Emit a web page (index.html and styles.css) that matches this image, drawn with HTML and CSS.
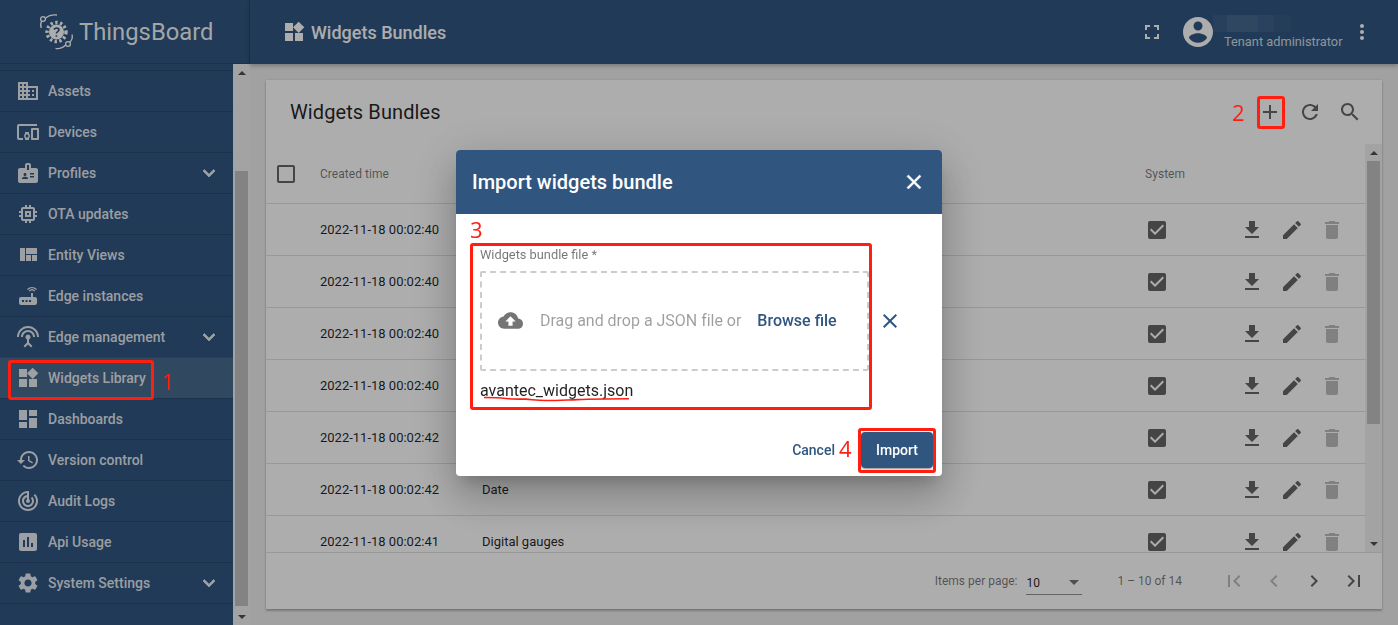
FILE: index.html
```html
<!DOCTYPE html>
<html lang="en">
<head>
    <meta charset="UTF-8">
    <title>ThingsBoard | Widgets Bundles</title>
    <link rel="stylesheet" href="styles.css">
</head>
<body>

    <svg class="sprite" xmlns="http://www.w3.org/2000/svg">
        <symbol id="i-assets" viewBox="0 0 24 24"><path d="M12 7V3H2v18h20V7H12zM6 19H4v-2h2v2zm0-4H4v-2h2v2zm0-4H4V9h2v2zm0-4H4V5h2v2zm4 12H8v-2h2v2zm0-4H8v-2h2v2zm0-4H8V9h2v2zm0-4H8V5h2v2zm10 12h-8v-2h2v-2h-2v-2h2v-2h-2V9h8v10zm-2-8h-2v2h2v-2zm0 4h-2v2h2v-2z"/></symbol>
        <symbol id="i-devices" viewBox="0 0 24 24"><path d="M3 6h18V4H3c-1.1 0-2 .9-2 2v12c0 1.1.9 2 2 2h4v-2H3V6zm10 6H9v1.78c-.61.55-1 1.33-1 2.22s.39 1.67 1 2.22V20h4v-1.78c.61-.55 1-1.34 1-2.22s-.39-1.67-1-2.22V12zm-2 5.5c-.83 0-1.5-.67-1.5-1.5s.67-1.5 1.5-1.5 1.5.67 1.5 1.5-.67 1.5-1.5 1.5zM22 8h-6c-.5 0-1 .5-1 1v10c0 .5.5 1 1 1h6c.5 0 1-.5 1-1V9c0-.5-.5-1-1-1zm-1 10h-4v-8h4v8z"/></symbol>
        <symbol id="i-badge" viewBox="0 0 24 24"><path d="M20 7h-5V4c0-1.1-.9-2-2-2h-2c-1.1 0-2 .9-2 2v3H4c-1.1 0-2 .9-2 2v11c0 1.1.9 2 2 2h16c1.1 0 2-.9 2-2V9c0-1.1-.9-2-2-2zM9 12c.83 0 1.5.67 1.5 1.5S9.83 15 9 15s-1.5-.67-1.5-1.5S8.17 12 9 12zm3 6H6v-.75c0-1 2-1.5 3-1.5s3 .5 3 1.5V18zm1-9h-2V4h2v5zm5 7.5h-4V15h4v1.5zm0-3h-4V12h4v1.5z"/></symbol>
        <symbol id="i-memory" viewBox="0 0 24 24"><path d="M15 9H9v6h6V9zm-2 4h-2v-2h2v2zm8-2V9h-2V7c0-1.1-.9-2-2-2h-2V3h-2v2h-2V3H9v2H7c-1.1 0-2 .9-2 2v2H3v2h2v2H3v2h2v2c0 1.1.9 2 2 2h2v2h2v-2h2v2h2v-2h2c1.1 0 2-.9 2-2v-2h2v-2h-2v-2h2zm-4 6H7V7h10v10z"/></symbol>
        <symbol id="i-quilt" viewBox="0 0 24 24"><path d="M10 18h5v-6h-5v6zm-6 0h5V5H4v13zm12 0h5v-6h-5v6zM10 5v6h11V5H10z"/></symbol>
        <symbol id="i-router" viewBox="0 0 24 24"><path d="M20.2 5.9l.8-.8C19.6 3.7 17.8 3 16 3s-3.6.7-5 2.1l.8.8C13 4.8 14.5 4.2 16 4.2s3 .6 4.2 1.7zm-.9.8c-.9-.9-2.1-1.4-3.3-1.4s-2.4.5-3.3 1.4l.8.8c.7-.7 1.6-1 2.5-1 .9 0 1.8.3 2.5 1l.8-.8zM19 13h-2V9h-2v4H5c-1.1 0-2 .9-2 2v4c0 1.1.9 2 2 2h14c1.1 0 2-.9 2-2v-4c0-1.1-.9-2-2-2zM8 18H6v-2h2v2zm3.5 0h-2v-2h2v2zm3.5 0h-2v-2h2v2z"/></symbol>
        <symbol id="i-antenna" viewBox="0 0 24 24"><path d="M12 5c-3.87 0-7 3.13-7 7h2c0-2.76 2.24-5 5-5s5 2.24 5 5h2c0-3.87-3.13-7-7-7zm1 9.29c.88-.39 1.5-1.26 1.5-2.29 0-1.38-1.12-2.5-2.5-2.5S9.5 10.62 9.5 12c0 1.02.62 1.9 1.5 2.29v3.3L7.59 21 9 22.41l3-3 3 3L16.41 21 13 17.59v-3.3zM12 1C5.93 1 1 5.93 1 12h2c0-4.97 4.03-9 9-9s9 4.03 9 9h2c0-6.07-4.93-11-11-11z"/></symbol>
        <symbol id="i-widgets" viewBox="0 0 24 24"><path d="M13 13v8h8v-8h-8zM3 21h8v-8H3v8zM3 3v8h8V3H3zm13.66-1.31L11 7.34 16.66 13l5.66-5.66-5.66-5.65z"/></symbol>
        <symbol id="i-dashboard" viewBox="0 0 24 24"><path d="M3 13h8V3H3v10zm0 8h8v-6H3v6zm10 0h8V11h-8v10zm0-18v6h8V3h-8z"/></symbol>
        <symbol id="i-history" viewBox="0 0 24 24"><path d="M13 3c-4.97 0-9 4.03-9 9H1l3.89 3.89.07.14L9 12H6c0-3.87 3.13-7 7-7s7 3.13 7 7-3.13 7-7 7c-1.93 0-3.68-.79-4.94-2.06l-1.42 1.42C8.27 19.99 10.51 21 13 21c4.97 0 9-4.03 9-9s-4.03-9-9-9zm-1 5v5l4.28 2.54.72-1.21-3.5-2.08V8H12z"/></symbol>
        <symbol id="i-track" viewBox="0 0 24 24"><path d="M19.07 4.93l-1.41 1.41C19.1 7.79 20 9.79 20 12c0 4.42-3.58 8-8 8s-8-3.58-8-8c0-4.08 3.05-7.44 7-7.93v2.02C8.16 6.57 6 9.03 6 12c0 3.31 2.69 6 6 6s6-2.69 6-6c0-1.66-.67-3.16-1.76-4.24l-1.41 1.41C15.55 9.9 16 10.9 16 12c0 2.21-1.79 4-4 4s-4-1.79-4-4c0-1.86 1.28-3.41 3-3.86v2.14c-.6.35-1 .98-1 1.72 0 1.1.9 2 2 2s2-.9 2-2c0-.74-.4-1.38-1-1.72V2h-1C6.48 2 2 6.48 2 12s4.48 10 10 10 10-4.48 10-10c0-2.76-1.12-5.26-2.93-7.07z"/></symbol>
        <symbol id="i-chart" viewBox="0 0 24 24"><path d="M19 3H5c-1.1 0-2 .9-2 2v14c0 1.1.9 2 2 2h14c1.1 0 2-.9 2-2V5c0-1.1-.9-2-2-2zM9 17H7v-7h2v7zm4 0h-2V7h2v10zm4 0h-2v-4h2v4z"/></symbol>
        <symbol id="i-settings" viewBox="0 0 24 24"><path d="M19.14 12.94c.04-.3.06-.61.06-.94 0-.32-.02-.64-.07-.94l2.03-1.58c.18-.14.23-.41.12-.61l-1.92-3.32c-.12-.22-.37-.29-.59-.22l-2.39.96c-.5-.38-1.03-.7-1.62-.94l-.36-2.54c-.04-.24-.24-.41-.48-.41h-3.84c-.24 0-.43.17-.47.41l-.36 2.54c-.59.24-1.13.57-1.62.94l-2.39-.96c-.22-.08-.47 0-.59.22L2.74 8.87c-.12.21-.08.47.12.61l2.03 1.58c-.05.3-.09.63-.09.94s.02.64.07.94l-2.03 1.58c-.18.14-.23.41-.12.61l1.92 3.32c.12.22.37.29.59.22l2.39-.96c.5.38 1.03.7 1.62.94l.36 2.54c.05.24.24.41.48.41h3.84c.24 0 .44-.17.47-.41l.36-2.54c.59-.24 1.13-.56 1.62-.94l2.39.96c.22.08.47 0 .59-.22l1.92-3.32c.12-.22.07-.47-.12-.61l-2.01-1.58zM12 15.6c-1.98 0-3.6-1.62-3.6-3.6s1.62-3.6 3.6-3.6 3.6 1.62 3.6 3.6-1.62 3.6-3.6 3.6z"/></symbol>
        <symbol id="i-expand" viewBox="0 0 24 24"><path d="M16.59 8.59L12 13.17 7.41 8.59 6 10l6 6 6-6z"/></symbol>
        <symbol id="i-fullscreen" viewBox="0 0 24 24"><path d="M7 14H5v5h5v-2H7v-3zm-2-4h2V7h3V5H5v5zm12 7h-3v2h5v-5h-2v3zM14 5v2h3v3h2V5h-5z"/></symbol>
        <symbol id="i-account" viewBox="0 0 24 24"><path d="M12 2C6.48 2 2 6.48 2 12s4.48 10 10 10 10-4.48 10-10S17.52 2 12 2zm0 3c1.66 0 3 1.34 3 3s-1.34 3-3 3-3-1.34-3-3 1.34-3 3-3zm0 14.2c-2.5 0-4.71-1.28-6-3.22.03-1.99 4-3.08 6-3.08 1.99 0 5.97 1.09 6 3.08-1.29 1.94-3.5 3.22-6 3.22z"/></symbol>
        <symbol id="i-more" viewBox="0 0 24 24"><path d="M12 8c1.1 0 2-.9 2-2s-.9-2-2-2-2 .9-2 2 .9 2 2 2zm0 2c-1.1 0-2 .9-2 2s.9 2 2 2 2-.9 2-2-.9-2-2-2zm0 6c-1.1 0-2 .9-2 2s.9 2 2 2 2-.9 2-2-.9-2-2-2z"/></symbol>
        <symbol id="i-add" viewBox="0 0 24 24"><path d="M19 13h-6v6h-2v-6H5v-2h6V5h2v6h6v2z"/></symbol>
        <symbol id="i-refresh" viewBox="0 0 24 24"><path d="M17.65 6.35C16.2 4.9 14.21 4 12 4c-4.42 0-7.99 3.58-7.99 8s3.57 8 7.99 8c3.73 0 6.84-2.55 7.73-6h-2.08c-.82 2.33-3.04 4-5.65 4-3.31 0-6-2.69-6-6s2.69-6 6-6c1.66 0 3.14.69 4.22 1.78L13 11h7V4l-2.35 2.35z"/></symbol>
        <symbol id="i-search" viewBox="0 0 24 24"><path d="M15.5 14h-.79l-.28-.27C15.41 12.59 16 11.11 16 9.5 16 5.91 13.09 3 9.5 3S3 5.91 3 9.5 5.91 16 9.5 16c1.61 0 3.09-.59 4.23-1.57l.27.28v.79l5 4.99L20.49 19l-4.99-5zm-6 0C7.01 14 5 11.99 5 9.5S7.01 5 9.5 5 14 7.01 14 9.5 11.99 14 9.5 14z"/></symbol>
        <symbol id="i-checked" viewBox="0 0 24 24"><path d="M19 3H5c-1.11 0-2 .9-2 2v14c0 1.1.89 2 2 2h14c1.11 0 2-.9 2-2V5c0-1.1-.89-2-2-2zm-9 14l-5-5 1.41-1.41L10 14.17l7.59-7.59L19 8l-9 9z"/></symbol>
        <symbol id="i-unchecked" viewBox="0 0 24 24"><path d="M19 5v14H5V5h14m0-2H5c-1.1 0-2 .9-2 2v14c0 1.1.9 2 2 2h14c1.1 0 2-.9 2-2V5c0-1.1-.9-2-2-2z"/></symbol>
        <symbol id="i-download" viewBox="0 0 24 24"><path d="M19 9h-4V3H9v6H5l7 7 7-7zM5 18v2h14v-2H5z"/></symbol>
        <symbol id="i-edit" viewBox="0 0 24 24"><path d="M3 17.25V21h3.75L17.81 9.94l-3.75-3.75L3 17.25zM20.71 7.04c.39-.39.39-1.02 0-1.41l-2.34-2.34c-.39-.39-1.02-.39-1.41 0l-1.83 1.83 3.75 3.75 1.83-1.83z"/></symbol>
        <symbol id="i-delete" viewBox="0 0 24 24"><path d="M6 19c0 1.1.9 2 2 2h8c1.1 0 2-.9 2-2V7H6v12zM19 4h-3.5l-1-1h-5l-1 1H5v2h14V4z"/></symbol>
        <symbol id="i-close" viewBox="0 0 24 24"><path d="M19 6.41L17.59 5 12 10.59 6.41 5 5 6.41 10.59 12 5 17.59 6.41 19 12 13.41 17.59 19 19 17.59 13.41 12z"/></symbol>
        <symbol id="i-cloud" viewBox="0 0 24 24"><path d="M19.35 10.04C18.67 6.59 15.64 4 12 4 9.11 4 6.6 5.64 5.35 8.04 2.34 8.36 0 10.91 0 14c0 3.31 2.69 6 6 6h13c2.76 0 5-2.24 5-5 0-2.64-2.05-4.78-4.65-4.96zM14 13v4h-4v-4H7l5-5 5 5h-3z"/></symbol>
        <symbol id="i-first" viewBox="0 0 24 24"><path d="M18.41 16.59L13.82 12l4.59-4.59L17 6l-6 6 6 6zM6 6h2v12H6z"/></symbol>
        <symbol id="i-last" viewBox="0 0 24 24"><path d="M5.59 7.41L10.18 12l-4.59 4.59L7 18l6-6-6-6zM16 6h2v12h-2z"/></symbol>
        <symbol id="i-prev" viewBox="0 0 24 24"><path d="M15.41 7.41L14 6l-6 6 6 6 1.41-1.41L10.83 12z"/></symbol>
        <symbol id="i-next" viewBox="0 0 24 24"><path d="M10 6L8.59 7.41 13.17 12l-4.58 4.59L10 18l6-6z"/></symbol>
    </svg>

    <div class="app">
        <aside class="sidenav">
            <div class="brand">
                <svg class="brand-logo" viewBox="0 0 38 38" fill="none" stroke="#fff">
                    <circle cx="18.5" cy="19" r="7.5" fill="#fff" stroke="none"/>
                    <circle cx="18.5" cy="19" r="9.5" stroke-width="3.4" stroke-dasharray="2.4 2.4"/>
                    <path d="M16 16.5c1-2 5-2 5 .3 0 1.8-2.6 1.8-2.6 3.6M18.4 22.2v1.6" stroke="#305680" stroke-width="1.7"/>
                    <circle cx="5" cy="6" r="2.4" stroke-width="1.3"/>
                    <path d="M3.8 8.2C2.6 10 2.4 12.5 3.2 15M7.4 5.2C10 3 15 1.6 19 2" stroke-width="1.3"/>
                    <circle cx="30" cy="31" r="2.4" stroke-width="1.3"/>
                    <path d="M31.8 29.2C34 27 34.8 24.5 34 21.5M27.6 32C25 34.6 21 36 17.5 35.4" stroke-width="1.3"/>
                </svg>
                <span class="brand-name">ThingsBoard</span>
            </div>
            <div class="side-body">
                <nav class="menu">
                    <a class="menu-item"><svg class="icon"><use href="#i-assets"/></svg><span>Assets</span></a>
                    <a class="menu-item"><svg class="icon"><use href="#i-devices"/></svg><span>Devices</span></a>
                    <a class="menu-item"><svg class="icon"><use href="#i-badge"/></svg><span>Profiles</span><svg class="icon chevron"><use href="#i-expand"/></svg></a>
                    <a class="menu-item"><svg class="icon"><use href="#i-memory"/></svg><span>OTA updates</span></a>
                    <a class="menu-item"><svg class="icon"><use href="#i-quilt"/></svg><span>Entity Views</span></a>
                    <a class="menu-item"><svg class="icon"><use href="#i-router"/></svg><span>Edge instances</span></a>
                    <a class="menu-item"><svg class="icon"><use href="#i-antenna"/></svg><span>Edge management</span><svg class="icon chevron"><use href="#i-expand"/></svg></a>
                    <a class="menu-item active"><svg class="icon"><use href="#i-widgets"/></svg><span>Widgets Library</span></a>
                    <a class="menu-item"><svg class="icon"><use href="#i-dashboard"/></svg><span>Dashboards</span></a>
                    <a class="menu-item"><svg class="icon"><use href="#i-history"/></svg><span>Version control</span></a>
                    <a class="menu-item"><svg class="icon"><use href="#i-track"/></svg><span>Audit Logs</span></a>
                    <a class="menu-item"><svg class="icon"><use href="#i-chart"/></svg><span>Api Usage</span></a>
                    <a class="menu-item"><svg class="icon"><use href="#i-settings"/></svg><span>System Settings</span><svg class="icon chevron"><use href="#i-expand"/></svg></a>
                </nav>
                <div class="scrollbar side-scroll">
                    <div class="arrow up"></div>
                    <div class="track"><div class="thumb"></div></div>
                    <div class="arrow down"></div>
                </div>
            </div>
        </aside>

        <main class="main">
            <header class="toolbar">
                <svg class="icon"><use href="#i-widgets"/></svg>
                <span class="toolbar-title">Widgets Bundles</span>
                <svg class="icon fullscreen"><use href="#i-fullscreen"/></svg>
                <svg class="icon avatar"><use href="#i-account"/></svg>
                <div class="user">
                    <div class="user-blur"></div>
                    <div class="user-role">Tenant administrator</div>
                </div>
                <svg class="icon more"><use href="#i-more"/></svg>
            </header>

            <div class="content">
                <section class="card">
                    <div class="card-head">
                        <h2>Widgets Bundles</h2>
                        <button class="icon-btn"><svg class="icon"><use href="#i-add"/></svg></button>
                        <button class="icon-btn"><svg class="icon"><use href="#i-refresh"/></svg></button>
                        <button class="icon-btn"><svg class="icon"><use href="#i-search"/></svg></button>
                    </div>
                    <div class="table-wrap">
                        <div class="table">
                            <div class="row head">
                                <svg class="icon tick"><use href="#i-unchecked"/></svg>
                                <span>Created time</span>
                                <span></span>
                                <span>System</span>
                            </div>
                            <div class="row">
                                <span></span><span>2022-11-18 00:02:40</span><span></span>
                                <svg class="icon tick"><use href="#i-checked"/></svg>
                                <div class="actions"><svg class="icon"><use href="#i-download"/></svg><svg class="icon"><use href="#i-edit"/></svg><svg class="icon off"><use href="#i-delete"/></svg></div>
                            </div>
                            <div class="row">
                                <span></span><span>2022-11-18 00:02:40</span><span></span>
                                <svg class="icon tick"><use href="#i-checked"/></svg>
                                <div class="actions"><svg class="icon"><use href="#i-download"/></svg><svg class="icon"><use href="#i-edit"/></svg><svg class="icon off"><use href="#i-delete"/></svg></div>
                            </div>
                            <div class="row">
                                <span></span><span>2022-11-18 00:02:40</span><span></span>
                                <svg class="icon tick"><use href="#i-checked"/></svg>
                                <div class="actions"><svg class="icon"><use href="#i-download"/></svg><svg class="icon"><use href="#i-edit"/></svg><svg class="icon off"><use href="#i-delete"/></svg></div>
                            </div>
                            <div class="row">
                                <span></span><span>2022-11-18 00:02:40</span><span></span>
                                <svg class="icon tick"><use href="#i-checked"/></svg>
                                <div class="actions"><svg class="icon"><use href="#i-download"/></svg><svg class="icon"><use href="#i-edit"/></svg><svg class="icon off"><use href="#i-delete"/></svg></div>
                            </div>
                            <div class="row">
                                <span></span><span>2022-11-18 00:02:42</span><span></span>
                                <svg class="icon tick"><use href="#i-checked"/></svg>
                                <div class="actions"><svg class="icon"><use href="#i-download"/></svg><svg class="icon"><use href="#i-edit"/></svg><svg class="icon off"><use href="#i-delete"/></svg></div>
                            </div>
                            <div class="row">
                                <span></span><span>2022-11-18 00:02:42</span><span>Date</span>
                                <svg class="icon tick"><use href="#i-checked"/></svg>
                                <div class="actions"><svg class="icon"><use href="#i-download"/></svg><svg class="icon"><use href="#i-edit"/></svg><svg class="icon off"><use href="#i-delete"/></svg></div>
                            </div>
                            <div class="row">
                                <span></span><span>2022-11-18 00:02:41</span><span>Digital gauges</span>
                                <svg class="icon tick"><use href="#i-checked"/></svg>
                                <div class="actions"><svg class="icon"><use href="#i-download"/></svg><svg class="icon"><use href="#i-edit"/></svg><svg class="icon off"><use href="#i-delete"/></svg></div>
                            </div>
                        </div>
                        <div class="scrollbar table-scroll">
                            <div class="arrow up"></div>
                            <div class="track"><div class="thumb"></div></div>
                            <div class="arrow down"></div>
                        </div>
                    </div>
                    <div class="paginator">
                        <span class="page-label">Items per page:</span>
                        <div class="page-select"><span>10</span><i class="caret"></i></div>
                        <span class="page-range">1 – 10 of 14</span>
                        <button class="icon-btn off"><svg class="icon"><use href="#i-first"/></svg></button>
                        <button class="icon-btn off"><svg class="icon"><use href="#i-prev"/></svg></button>
                        <button class="icon-btn"><svg class="icon"><use href="#i-next"/></svg></button>
                        <button class="icon-btn"><svg class="icon"><use href="#i-last"/></svg></button>
                    </div>
                </section>
            </div>
        </main>
    </div>

    <!-- backdrop and dialog -->
    <div class="overlay">
        <div class="dialog">
            <div class="dialog-head">
                <h2>Import widgets bundle</h2>
                <svg class="icon close"><use href="#i-close"/></svg>
            </div>
            <div class="dialog-body">
                <div class="file-field">
                    <label>Widgets bundle file *</label>
                    <div class="dropzone">
                        <svg class="icon cloud"><use href="#i-cloud"/></svg>
                        <span class="drop-text">Drag and drop a JSON file or</span>
                        <span class="browse">Browse file</span>
                    </div>
                    <div class="file-name">avantec_widgets.json</div>
                </div>
                <svg class="icon clear"><use href="#i-close"/></svg>
            </div>
            <div class="dialog-actions">
                <button class="btn-cancel">Cancel</button>
                <button class="btn-import">Import</button>
            </div>
        </div>
    </div>

    <!-- red notes drawn on top of the screenshot -->
    <div class="note-box nb1"></div>
    <div class="note-box nb2"></div>
    <div class="note-box nb3"></div>
    <div class="note-box nb4"></div>
    <span class="note-num n1">1</span>
    <span class="note-num n2">2</span>
    <span class="note-num n3">3</span>
    <span class="note-num n4">4</span>
    <svg class="note-line" viewBox="0 0 150 6" fill="none" stroke="#ff1e10" stroke-width="1.6"><path d="M1 1c8 0 14 0 22 1 7 .8 12 .6 20 .6 8 .6 12 1.6 22 1.4 10 0 20-.6 30-.9 12-.6 36-.9 52-.9"/></svg>

</body>
</html>
```

FILE: styles.css
```css
html, body {
    height: 100%;
}

body {
    margin: 0;
    overflow: hidden;
    font-family: Roboto, "Liberation Sans", sans-serif;
    font-size: 14px;
    color: rgba(0, 0, 0, 0.87);
    background-color: #eeeeee;
}

.sprite {
    display: none;
}

.icon {
    width: 24px;
    height: 24px;
    flex: none;
    fill: currentColor;
}

button {
    font-family: inherit;
    border: none;
    background: none;
    padding: 0;
}

.app {
    display: flex;
    height: 625px;
}

/* sidebar */
.sidenav {
    width: 250px;
    flex: none;
    display: flex;
    flex-direction: column;
    background-color: #305680;
    color: rgba(255, 255, 255, 0.88);
}

.brand {
    height: 64px;
    flex: none;
    box-sizing: border-box;
    display: flex;
    align-items: center;
    padding-left: 38px;
    border-right: 1px solid rgba(0, 0, 0, 0.12);
    border-bottom: 1px solid rgba(0, 0, 0, 0.12);
}

.brand-logo {
    width: 38px;
    height: 38px;
    flex: none;
}

.brand-name {
    margin-left: 3px;
    font-size: 23.8px;
    color: rgba(255, 255, 255, 0.95);
}

.side-body {
    flex: 1;
    display: flex;
    min-height: 0;
}

.menu {
    flex: 1;
    padding-top: 6px;
    overflow: hidden;
}

.menu-item {
    height: 41px;
    box-sizing: border-box;
    display: flex;
    align-items: center;
    padding: 0 12px 0 16px;
    border-top: 1px solid rgba(0, 0, 0, 0.12);
    font-weight: 500;
    font-size: 14px;
}

.menu-item:last-child {
    border-bottom: 1px solid rgba(0, 0, 0, 0.12);
    height: 42px;
}

.menu-item span {
    margin-left: 8px;
    flex: 1;
}

.menu-item.active {
    background-color: rgba(255, 255, 255, 0.12);
}

.chevron {
    stroke: currentColor;
    stroke-width: 0.7;
}

/* scrollbars */
.scrollbar {
    flex: none;
    display: flex;
    flex-direction: column;
    background-color: #f1f1f1;
}

.scrollbar .track {
    flex: 1;
}

.scrollbar .thumb {
    background-color: #c1c1c1;
    margin: 0 2px;
}

.arrow {
    height: 17px;
    flex: none;
    display: flex;
    align-items: center;
    justify-content: center;
}

.arrow::before {
    content: "";
    border-left: 4px solid transparent;
    border-right: 4px solid transparent;
}

.arrow.up::before {
    border-bottom: 4px solid #505050;
}

.arrow.down::before {
    border-top: 4px solid #505050;
}

.side-scroll {
    width: 17px;
}

.side-scroll .thumb {
    margin-top: 90px;
    height: 435px;
}

.table-scroll {
    width: 17px;
}

.table-scroll .thumb {
    height: 263px;
}

/* main area */
.main {
    flex: 1;
    min-width: 0;
    display: flex;
    flex-direction: column;
}

.toolbar {
    height: 64px;
    flex: none;
    box-sizing: border-box;
    display: flex;
    align-items: center;
    padding: 0 24px 0 32px;
    background-color: #305680;
    color: #fff;
    box-shadow: 0 2px 4px rgba(0, 0, 0, 0.25);
}

.toolbar-title {
    flex: 1;
    margin-left: 5px;
    font-size: 18px;
    font-weight: 500;
}

.fullscreen {
    margin-right: 16px;
}

.avatar {
    width: 36px;
    height: 36px;
}

.user {
    width: 126px;
    margin-left: 8px;
}

.user-blur {
    height: 17px;
    width: 78px;
    margin-left: -11px;
    background: linear-gradient(90deg, rgba(255, 255, 255, 0.05) 0 18%, rgba(255, 255, 255, 0.11) 18% 58%, rgba(255, 255, 255, 0.07) 58% 78%, rgba(255, 255, 255, 0.03) 78% 100%);
}

.user-role {
    font-size: 12.8px;
    line-height: 14px;
    margin-top: 3px;
    color: rgba(255, 255, 255, 0.8);
    white-space: nowrap;
}

.more {
    color: #fff;
}

.content {
    flex: 1;
    min-height: 0;
    padding: 16px;
    display: flex;
}

.card {
    flex: 1;
    min-width: 0;
    display: flex;
    flex-direction: column;
    background-color: #fff;
    box-shadow: 0 2px 2px rgba(0, 0, 0, 0.24), 0 0 2px rgba(0, 0, 0, 0.12);
}

.card-head {
    height: 64px;
    flex: none;
    box-sizing: border-box;
    display: flex;
    align-items: center;
    padding: 0 12px 0 24px;
}

.card-head h2 {
    flex: 1;
    margin: 0;
    font-size: 20px;
    font-weight: 400;
    letter-spacing: 0.1px;
}

.icon-btn {
    width: 40px;
    height: 40px;
    display: flex;
    align-items: center;
    justify-content: center;
    color: rgba(0, 0, 0, 0.6);
}

.icon-btn.off {
    color: rgba(0, 0, 0, 0.26);
}

.table-wrap {
    flex: 1;
    min-height: 0;
    display: flex;
    border-bottom: 1px solid rgba(0, 0, 0, 0.12);
}

.table {
    flex: 1;
    min-width: 0;
    overflow: hidden;
    font-size: 13px;
}

.row {
    height: 52px;
    box-sizing: border-box;
    display: grid;
    grid-template-columns: 54px 162px 1fr 87px 133px;
    align-items: center;
    border-bottom: 1px solid rgba(0, 0, 0, 0.12);
}

.row.head {
    height: 60px;
    font-size: 12px;
    letter-spacing: 0.05px;
    color: rgba(0, 0, 0, 0.54);
}

.tick {
    color: rgba(0, 0, 0, 0.6);
}

.row.head .tick {
    margin-left: 8px;
}

.actions {
    display: flex;
    gap: 16px;
    padding-left: 8px;
    color: rgba(0, 0, 0, 0.6);
}

.actions .off {
    color: rgba(0, 0, 0, 0.26);
}

.paginator {
    height: 56px;
    flex: none;
    box-sizing: border-box;
    display: flex;
    align-items: center;
    justify-content: flex-end;
    padding-right: 8px;
    font-size: 12px;
    color: rgba(0, 0, 0, 0.54);
}

.page-select {
    width: 56px;
    height: 28px;
    box-sizing: border-box;
    margin: 0 35px 0 9px;
    display: flex;
    align-items: center;
    justify-content: space-between;
    padding: 4px 2px 0 0;
    font-size: 12px;
    color: rgba(0, 0, 0, 0.87);
    border-bottom: 1px solid rgba(0, 0, 0, 0.42);
}

.caret {
    border-left: 5px solid transparent;
    border-right: 5px solid transparent;
    border-top: 5px solid rgba(0, 0, 0, 0.54);
    margin-right: 1px;
}

.page-range {
    margin-right: 32px;
}

/* dialog */
.overlay {
    position: fixed;
    top: 0;
    right: 0;
    bottom: 0;
    left: 0;
    background-color: rgba(0, 0, 0, 0.32);
}

.dialog {
    position: absolute;
    left: 456px;
    top: 150px;
    width: 486px;
    height: 326px;
    display: flex;
    flex-direction: column;
    background-color: #fff;
    border-radius: 4px;
    overflow: hidden;
    box-shadow: 0 11px 15px -7px rgba(0, 0, 0, 0.2), 0 24px 38px 3px rgba(0, 0, 0, 0.14), 0 9px 46px 8px rgba(0, 0, 0, 0.12);
}

.dialog-head {
    height: 64px;
    flex: none;
    box-sizing: border-box;
    display: flex;
    align-items: center;
    justify-content: space-between;
    padding: 0 16px;
    background-color: #305680;
    color: #fff;
}

.dialog-head h2 {
    margin: 0;
    font-size: 20px;
    font-weight: 500;
}

.close {
    stroke: currentColor;
    stroke-width: 0.5;
}

.dialog-body {
    flex: 1;
    display: flex;
    padding: 34px 0 0 24px;
}

.file-field {
    width: 389px;
}

.file-field label {
    display: block;
    height: 23px;
    line-height: 14px;
    font-size: 12.8px;
    color: rgba(0, 0, 0, 0.54);
}

.dropzone {
    height: 100px;
    box-sizing: border-box;
    display: flex;
    align-items: center;
    padding: 0 0 2px 16px;
    border: 2px dashed rgba(0, 0, 0, 0.2);
    border-radius: 2px;
    font-size: 16px;
}

.cloud {
    width: 25px;
    height: 25px;
    color: rgba(0, 0, 0, 0.54);
}

.drop-text {
    margin-left: 17px;
    letter-spacing: -0.02px;
    color: rgba(0, 0, 0, 0.38);
}

.browse {
    margin-left: 16px;
    font-weight: 500;
    color: #305680;
}

.file-name {
    margin-top: 10px;
    font-size: 16px;
    line-height: 19px;
}

.clear {
    margin: 61px 0 0 9px;
    color: #305680;
}

.dialog-actions {
    height: 44px;
    flex: none;
    box-sizing: border-box;
    display: flex;
    align-items: flex-start;
    justify-content: flex-end;
    padding-right: 9px;
}

.btn-cancel {
    font-size: 14px;
    font-weight: 500;
    line-height: 36px;
    color: #305680;
    margin-right: 26px;
}

.btn-import {
    width: 72px;
    height: 36px;
    font-size: 14px;
    font-weight: 500;
    color: #fff;
    background-color: #305680;
    border-radius: 4px;
    box-shadow: 0 3px 1px -2px rgba(0, 0, 0, 0.2), 0 2px 2px rgba(0, 0, 0, 0.14), 0 1px 5px rgba(0, 0, 0, 0.12);
}

/* red notes */
.note-box {
    position: fixed;
    box-sizing: border-box;
    border: 3px solid #ff1e10;
    border-radius: 3px;
}

.nb1 { left: 8px; top: 360px; width: 146px; height: 40px; }
.nb2 { left: 1257px; top: 96px; width: 28px; height: 33px; }
.nb3 { left: 470px; top: 243px; width: 402px; height: 167px; }
.nb4 { left: 858px; top: 428px; width: 78px; height: 45px; }

.note-num {
    position: fixed;
    font-family: "Open Sans", sans-serif;
    font-weight: 400;
    font-size: 22px;
    line-height: 24px;
    color: #ff1e10;
}

.n1 { left: 162px; top: 369px; }
.n2 { left: 1232px; top: 100px; }
.n3 { left: 470px; top: 217px; }
.n4 { left: 839px; top: 436px; }

.note-line {
    position: fixed;
    left: 483px;
    top: 396px;
    width: 149px;
    height: 7px;
}
```
